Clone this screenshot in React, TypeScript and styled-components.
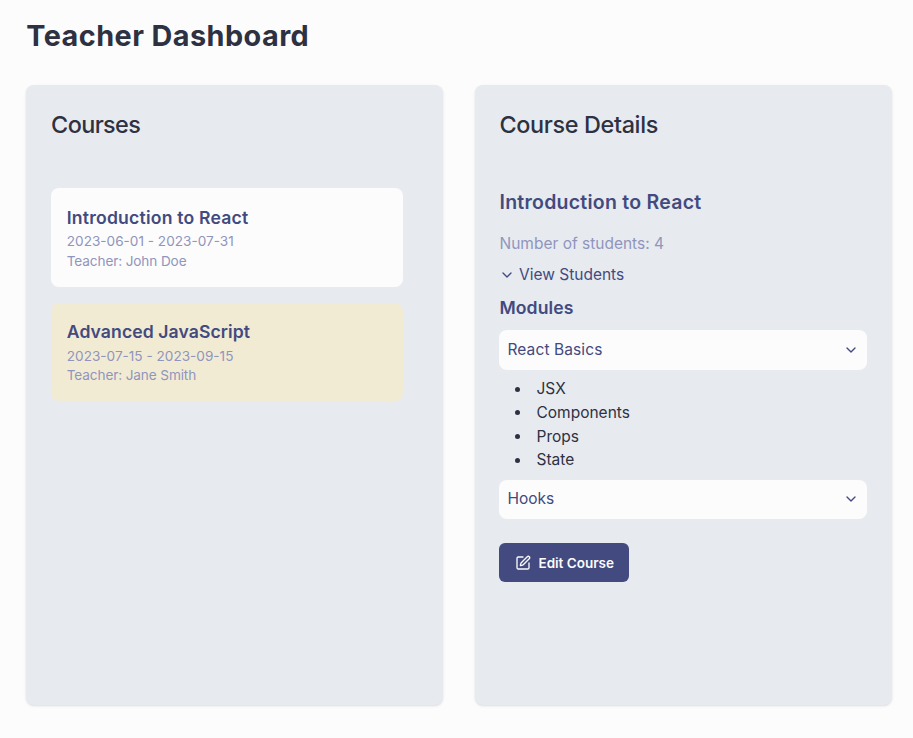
import React from 'react';
import styled, { createGlobalStyle } from 'styled-components';
import { ChevronDown, SquarePen } from 'lucide-react';

const GlobalStyle = createGlobalStyle`
  *, *::before, *::after { box-sizing: border-box; }
  body {
    margin: 0;
    background: #fcfcfc;
    color: #2d3142;
    font-family: Inter, "Liberation Sans", sans-serif;
    font-size: 15.5px;
    line-height: 24px;
  }
  h1, h2, h3, h4, p, ul { margin: 0; padding: 0; }
  svg { flex-shrink: 0; }
`;

const Page = styled.main`
  min-height: 738px;
  padding: 18px 21.5px 32px 26.3px;
`;

const PageTitle = styled.h1`
  font-size: 28.8px;
  font-weight: 700;
  line-height: 36px;
`;

const Columns = styled.div`
  display: grid;
  grid-template-columns: 1fr 1fr;
  gap: 31.6px;
  margin-top: 31px;
`;

const Panel = styled.section`
  height: 619.8px;
  padding: 24px 24.4px 24px 24.8px;
  border-radius: 8px;
  background: #e7ebef;
  box-shadow: 0 1px 3px rgba(0, 0, 0, 0.1), 0 1px 2px -1px rgba(0, 0, 0, 0.1);
`;

const PanelTitle = styled.h2`
  font-size: 23.4px;
  font-weight: 550;
  line-height: 32px;
`;

const CourseList = styled.div`
  display: flex;
  flex-direction: column;
  gap: 15.8px;
  margin: 47.3px 15.6px 0 0;
`;

const CourseCard = styled.article<{ $highlighted?: boolean }>`
  height: 98.5px;
  padding: 15.6px 15.7px;
  border-radius: 8px;
  background: ${(p) => (p.$highlighted ? '#f2ebd3' : '#fcfcfc')};
`;

const CourseName = styled.h3`
  color: #424a7f;
  font-size: 17.6px;
  font-weight: 600;
  line-height: 27.5px;
`;

const CourseMeta = styled.p`
  padding-top: 1px;
  color: #9095bd;
  font-size: 13.6px;
  line-height: 18.8px;
`;

const DetailName = styled.h3`
  margin-top: 46.7px;
  color: #424a7f;
  font-size: 19.5px;
  font-weight: 600;
  line-height: 28px;
`;

const StudentCount = styled.p`
  margin-top: 16px;
  color: #9095bd;
`;

const Disclosure = styled.button`
  display: flex;
  align-items: center;
  gap: 3.5px;
  margin-top: 7px;
  padding: 0;
  border: 0;
  background: none;
  color: #424a7f;
  font: inherit;
`;

const ModulesTitle = styled.h4`
  margin-top: 7.5px;
  color: #424a7f;
  font-size: 17.6px;
  font-weight: 600;
  line-height: 28px;
`;

const ModuleHeader = styled.button`
  display: flex;
  align-items: center;
  justify-content: space-between;
  width: 100%;
  height: 39.4px;
  padding: 0 8px;
  border: 0;
  border-radius: 8px;
  background: #fcfcfc;
  color: #424a7f;
  font: inherit;
`;

const Modules = styled.div`
  display: flex;
  flex-direction: column;
  gap: 7.8px;
  margin-top: 8px;
`;

const TopicList = styled.ul`
  list-style: none;
`;

const Topic = styled.li`
  display: flex;
  align-items: center;
  gap: 16px;
  padding-left: 16px;
  line-height: 23.65px;

  &::before {
    content: '';
    width: 5px;
    height: 5px;
    border-radius: 50%;
    background: #2d3142;
  }
`;

const EditButton = styled.button`
  display: flex;
  align-items: center;
  gap: 7px;
  width: 130px;
  height: 39.4px;
  margin-top: 23.8px;
  padding: 0 16px;
  border: 0;
  border-radius: 6px;
  background: #424a7f;
  color: #fcfcfc;
  font: 600 13.5px/20px Inter, "Liberation Sans", sans-serif;
  white-space: nowrap;
`;

const Label = styled.span<{ $spacing?: number }>`
  letter-spacing: ${(p) => p.$spacing ?? 0}px;
  white-space: nowrap;
`;

const courses = [
  { name: 'Introduction to React', dates: '2023-06-01 - 2023-07-31', teacher: 'John Doe', spacing: 0.2 },
  { name: 'Advanced JavaScript', dates: '2023-07-15 - 2023-09-15', teacher: 'Jane Smith', highlighted: true, spacing: 0.08 },
];

const topics = ['JSX', 'Components', 'Props', 'State'];

export default function App() {
  return (
    <>
      <GlobalStyle />
      <Page>
        <PageTitle><Label $spacing={0.45}>Teacher Dashboard</Label></PageTitle>
        <Columns>
          <Panel>
            <PanelTitle><Label $spacing={-0.6}>Courses</Label></PanelTitle>
            <CourseList>
              {courses.map((course) => (
                <CourseCard key={course.name} $highlighted={course.highlighted}>
                  <CourseName><Label $spacing={course.spacing}>{course.name}</Label></CourseName>
                  <CourseMeta><Label>{course.dates}</Label></CourseMeta>
                  <CourseMeta><Label $spacing={-0.12}>Teacher: {course.teacher}</Label></CourseMeta>
                </CourseCard>
              ))}
            </CourseList>
          </Panel>
          <Panel>
            <PanelTitle><Label $spacing={-0.35}>Course Details</Label></PanelTitle>
            <DetailName><Label $spacing={0.25}>Introduction to React</Label></DetailName>
            <StudentCount><Label>Number of students: 4</Label></StudentCount>
            <Disclosure><ChevronDown size={16} /><Label>View Students</Label></Disclosure>
            <ModulesTitle><Label $spacing={0.1}>Modules</Label></ModulesTitle>
            <Modules>
              <ModuleHeader><Label $spacing={0.1}>React Basics</Label><ChevronDown size={16} /></ModuleHeader>
              <TopicList>
                {topics.map((topic) => <Topic key={topic}><Label>{topic}</Label></Topic>)}
              </TopicList>
              <ModuleHeader><Label>Hooks</Label><ChevronDown size={16} /></ModuleHeader>
            </Modules>
            <EditButton><SquarePen size={16} /><Label>Edit Course</Label></EditButton>
          </Panel>
        </Columns>
      </Page>
    </>
  );
}
